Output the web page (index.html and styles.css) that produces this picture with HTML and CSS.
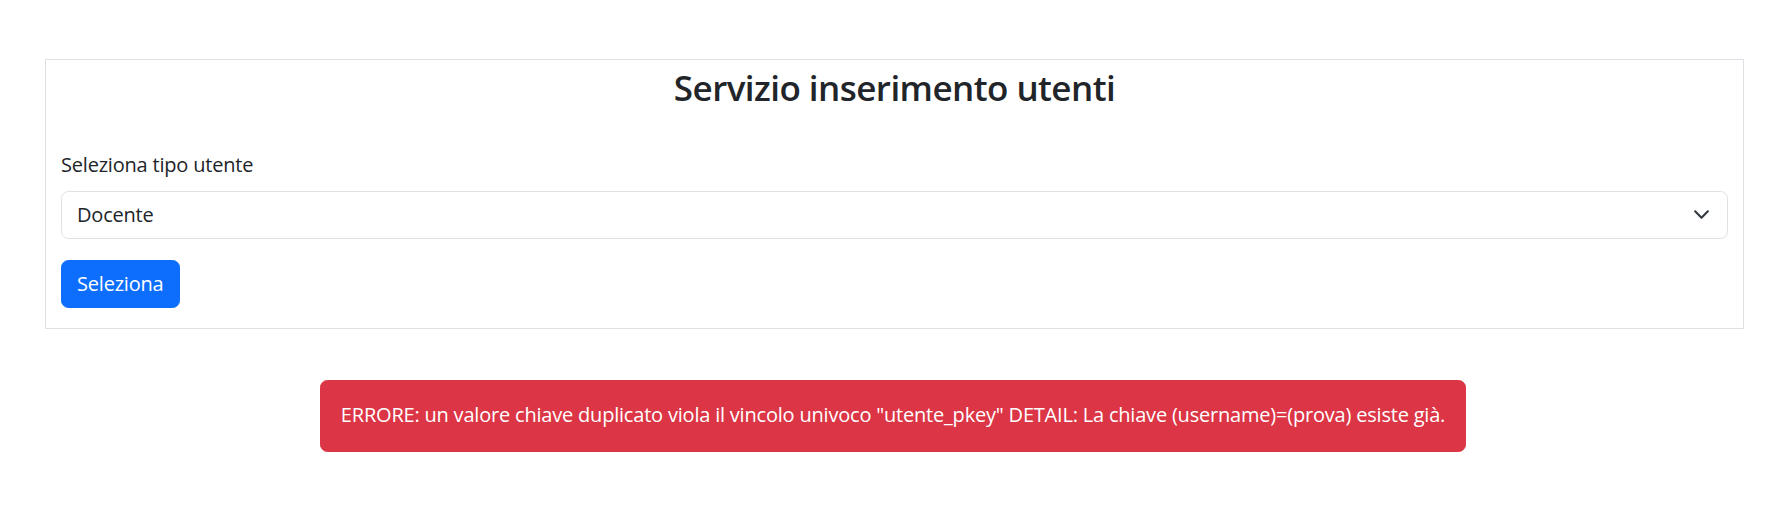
FILE: index.html
```html
<!DOCTYPE html>
<html lang="it">
<head>
<meta charset="utf-8">
<title>Servizio inserimento utenti</title>
<link rel="stylesheet" href="styles.css">
</head>
<body>
<main class="page">
  <section class="card">
    <h3 class="card-title">Servizio inserimento utenti</h3>
    <form class="form">
      <label class="form-label" for="tipo">Seleziona tipo utente</label>
      <div class="select" id="tipo">
        <span class="select-value">Docente</span>
        <svg class="chevron" viewBox="0 0 16 16" width="17" height="17" aria-hidden="true">
          <path d="m2 5 6 6 6-6" fill="none" stroke="#343a40" stroke-width="2" stroke-linecap="round" stroke-linejoin="round"/>
        </svg>
      </div>
      <button type="button" class="btn">Seleziona</button>
    </form>
  </section>
  <div class="alert-wrap">
    <div class="alert">ERRORE: un valore chiave duplicato viola il vincolo univoco "utente_pkey" DETAIL: La chiave (username)=(prova) esiste già.</div>
  </div>
</main>
</body>
</html>
```

FILE: styles.css
```css
* { box-sizing: border-box; }
html, body {
  margin: 0;
  padding: 0;
  background: #fff;
}
body {
  font-family: "Open Sans", "Noto Sans", "Liberation Sans", sans-serif;
  font-size: 20px;
  line-height: 30px;
  letter-spacing: -0.2px;
  color: #212529;
}
.page {
  padding-top: 59px;
}
.card {
  margin: 0 42px 0 45px;
  border: 1px solid #dee2e6;
  padding: 7px 15px 20px 15px;
}
.card-title {
  margin: 0;
  text-align: center;
  font-size: 35px;
  line-height: 42px;
  font-weight: 600;
  letter-spacing: -0.55px;
}
.form {
  display: flex;
  flex-direction: column;
  align-items: flex-start;
  padding-top: 40.5px;
}
.form-label {
  margin-bottom: 11px;
}
.select {
  align-self: stretch;
  height: 48px;
  border: 1px solid #dee2e6;
  border-radius: 7.5px;
  padding: 0 17px 0 15px;
  display: flex;
  align-items: center;
  justify-content: space-between;
}
.btn {
  margin-top: 21px;
  height: 48px;
  padding: 0 15px;
  border: 1px solid #0d6efd;
  background: #0d6efd;
  color: #fff;
  border-radius: 7.5px;
  font: inherit;
  letter-spacing: inherit;
}
.alert-wrap {
  display: flex;
  justify-content: center;
  padding-top: 51.5px;
}
.alert {
  background: #dc3545;
  color: #fff;
  border: 1px solid #dc3545;
  border-radius: 7.5px;
  padding: 18.5px 20px 21.5px;
}
```
